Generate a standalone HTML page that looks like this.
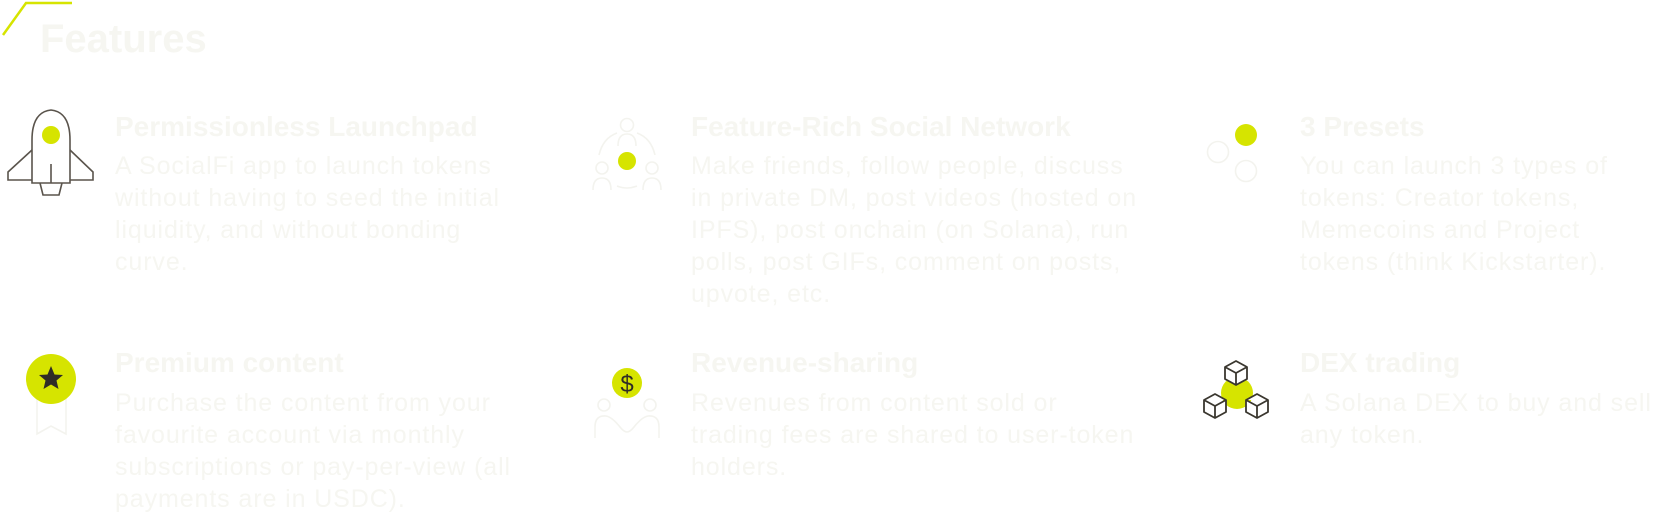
<!DOCTYPE html>
<html><head><meta charset="utf-8"><style>
html,body{margin:0;padding:0;background:#fff;width:1667px;height:515px;overflow:hidden;position:relative;font-family:"Liberation Sans",sans-serif;color:#f6f6f1}
.t{position:absolute;font-weight:bold;font-size:28px;line-height:32px;white-space:nowrap}
.b{position:absolute;font-size:25px;letter-spacing:0.9px;line-height:32px;white-space:nowrap}
svg{position:absolute;left:0;top:0}
</style></head><body>
<svg width="1667" height="515">
<polyline points="3,35 26,3 72,3" fill="none" stroke="#d6e400" stroke-width="2.5"/>
<g fill="none" stroke="#5a544c" stroke-width="1.6">
<path d="M32,183 L32,140 Q32,112 51,110 Q70,112 70,140 L70,183 Z"/>
<path d="M32,150 L8,172 L8,180 L32,180"/>
<path d="M70,150 L93,172 L93,180 L70,180"/>
<path d="M40,183 L43,195 L59,195 L62,183"/>
<line x1="51" y1="164" x2="51" y2="183"/>
</g>
<circle cx="51" cy="135" r="9" fill="#d6e400"/>
<g fill="none" stroke="#f3f3ee" stroke-width="1.6">
<circle cx="627" cy="125" r="6.5"/>
<path d="M618,146 Q618,134 627,134 Q636,134 636,146"/>
<path d="M599,155 Q603,138 617,133"/><path d="M655,155 Q651,138 637,133"/>
<circle cx="602" cy="168" r="6"/><circle cx="652" cy="168" r="6"/>
<path d="M593,190 Q593,178 602,178 Q611,178 611,190"/>
<path d="M643,190 Q643,178 652,178 Q661,178 661,190"/>
<path d="M617,186 Q627,190 637,186"/>
</g>
<circle cx="627" cy="161" r="9" fill="#d6e400"/>
<circle cx="1246" cy="135" r="11" fill="#d6e400"/>
<g fill="none" stroke="#f3f3ee" stroke-width="1.6"><circle cx="1218" cy="152" r="10.5"/><circle cx="1246" cy="171" r="10.5"/></g>
<path d="M37,395 L37,434 L51,426 L66,434 L66,395" fill="none" stroke="#f3f3ee" stroke-width="1.6"/>
<circle cx="51" cy="379" r="25" fill="#d6e400"/>
<path d="M51,366 L54.5,374.5 L63,375 L56.5,380.5 L58.5,389 L51,384.5 L43.5,389 L45.5,380.5 L39,375 L47.5,374.5 Z" fill="#2f2c26"/>
<g fill="none" stroke="#f3f3ee" stroke-width="1.6">
<circle cx="604" cy="405" r="6"/><circle cx="650" cy="405" r="6"/>
<path d="M595,438 L595,427 Q595,415 606,416 Q612,417 620,427 Q624,432 627,432"/>
<path d="M659,438 L659,427 Q659,415 648,416 Q642,417 634,427 Q630,432 627,432"/>
</g>
<circle cx="627" cy="383" r="15" fill="#d6e400"/>
<text x="627" y="392" text-anchor="middle" font-family="Liberation Sans" font-size="24" fill="#2f2c26">$</text>
<circle cx="1237" cy="393" r="16" fill="#d6e400"/>
<g fill="#fff" stroke="#3a372f" stroke-width="1.8" stroke-linejoin="round">
<g transform="translate(1236,373)"><path d="M0,-12 L11,-6 L11,6 L0,12 L-11,6 L-11,-6 Z M-11,-6 L0,0 L11,-6 M0,0 L0,12"/></g>
<g transform="translate(1215,406)"><path d="M0,-12 L11,-6 L11,6 L0,12 L-11,6 L-11,-6 Z M-11,-6 L0,0 L11,-6 M0,0 L0,12"/></g>
<g transform="translate(1257,406)"><path d="M0,-12 L11,-6 L11,6 L0,12 L-11,6 L-11,-6 Z M-11,-6 L0,0 L11,-6 M0,0 L0,12"/></g>
</g>
</svg>
<div class="t" style="left:40px;top:15px;font-size:40px;line-height:48px">Features</div>

<div class="t" style="left:115px;top:111px">Permissionless Launchpad</div>
<div class="b" style="left:115px;top:150px">A SocialFi app to launch tokens<br>without having to seed the initial<br>liquidity, and without bonding<br>curve.</div>

<div class="t" style="left:691px;top:111px">Feature-Rich Social Network</div>
<div class="b" style="left:691px;top:150px">Make friends, follow people, discuss<br>in private DM, post videos (hosted on<br>IPFS), post onchain (on Solana), run<br>polls, post GIFs, comment on posts,<br>upvote, etc.</div>

<div class="t" style="left:1300px;top:111px">3 Presets</div>
<div class="b" style="left:1300px;top:150px">You can launch 3 types of<br>tokens: Creator tokens,<br>Memecoins and Project<br>tokens (think Kickstarter).</div>

<div class="t" style="left:115px;top:347px">Premium content</div>
<div class="b" style="left:115px;top:387px">Purchase the content from your<br>favourite account via monthly<br>subscriptions or pay-per-view (all<br>payments are in USDC).</div>

<div class="t" style="left:691px;top:347px">Revenue-sharing</div>
<div class="b" style="left:691px;top:387px">Revenues from content sold or<br>trading fees are shared to user-token<br>holders.</div>

<div class="t" style="left:1300px;top:347px">DEX trading</div>
<div class="b" style="left:1300px;top:387px">A Solana DEX to buy and sell<br>any token.</div>
</body></html>
